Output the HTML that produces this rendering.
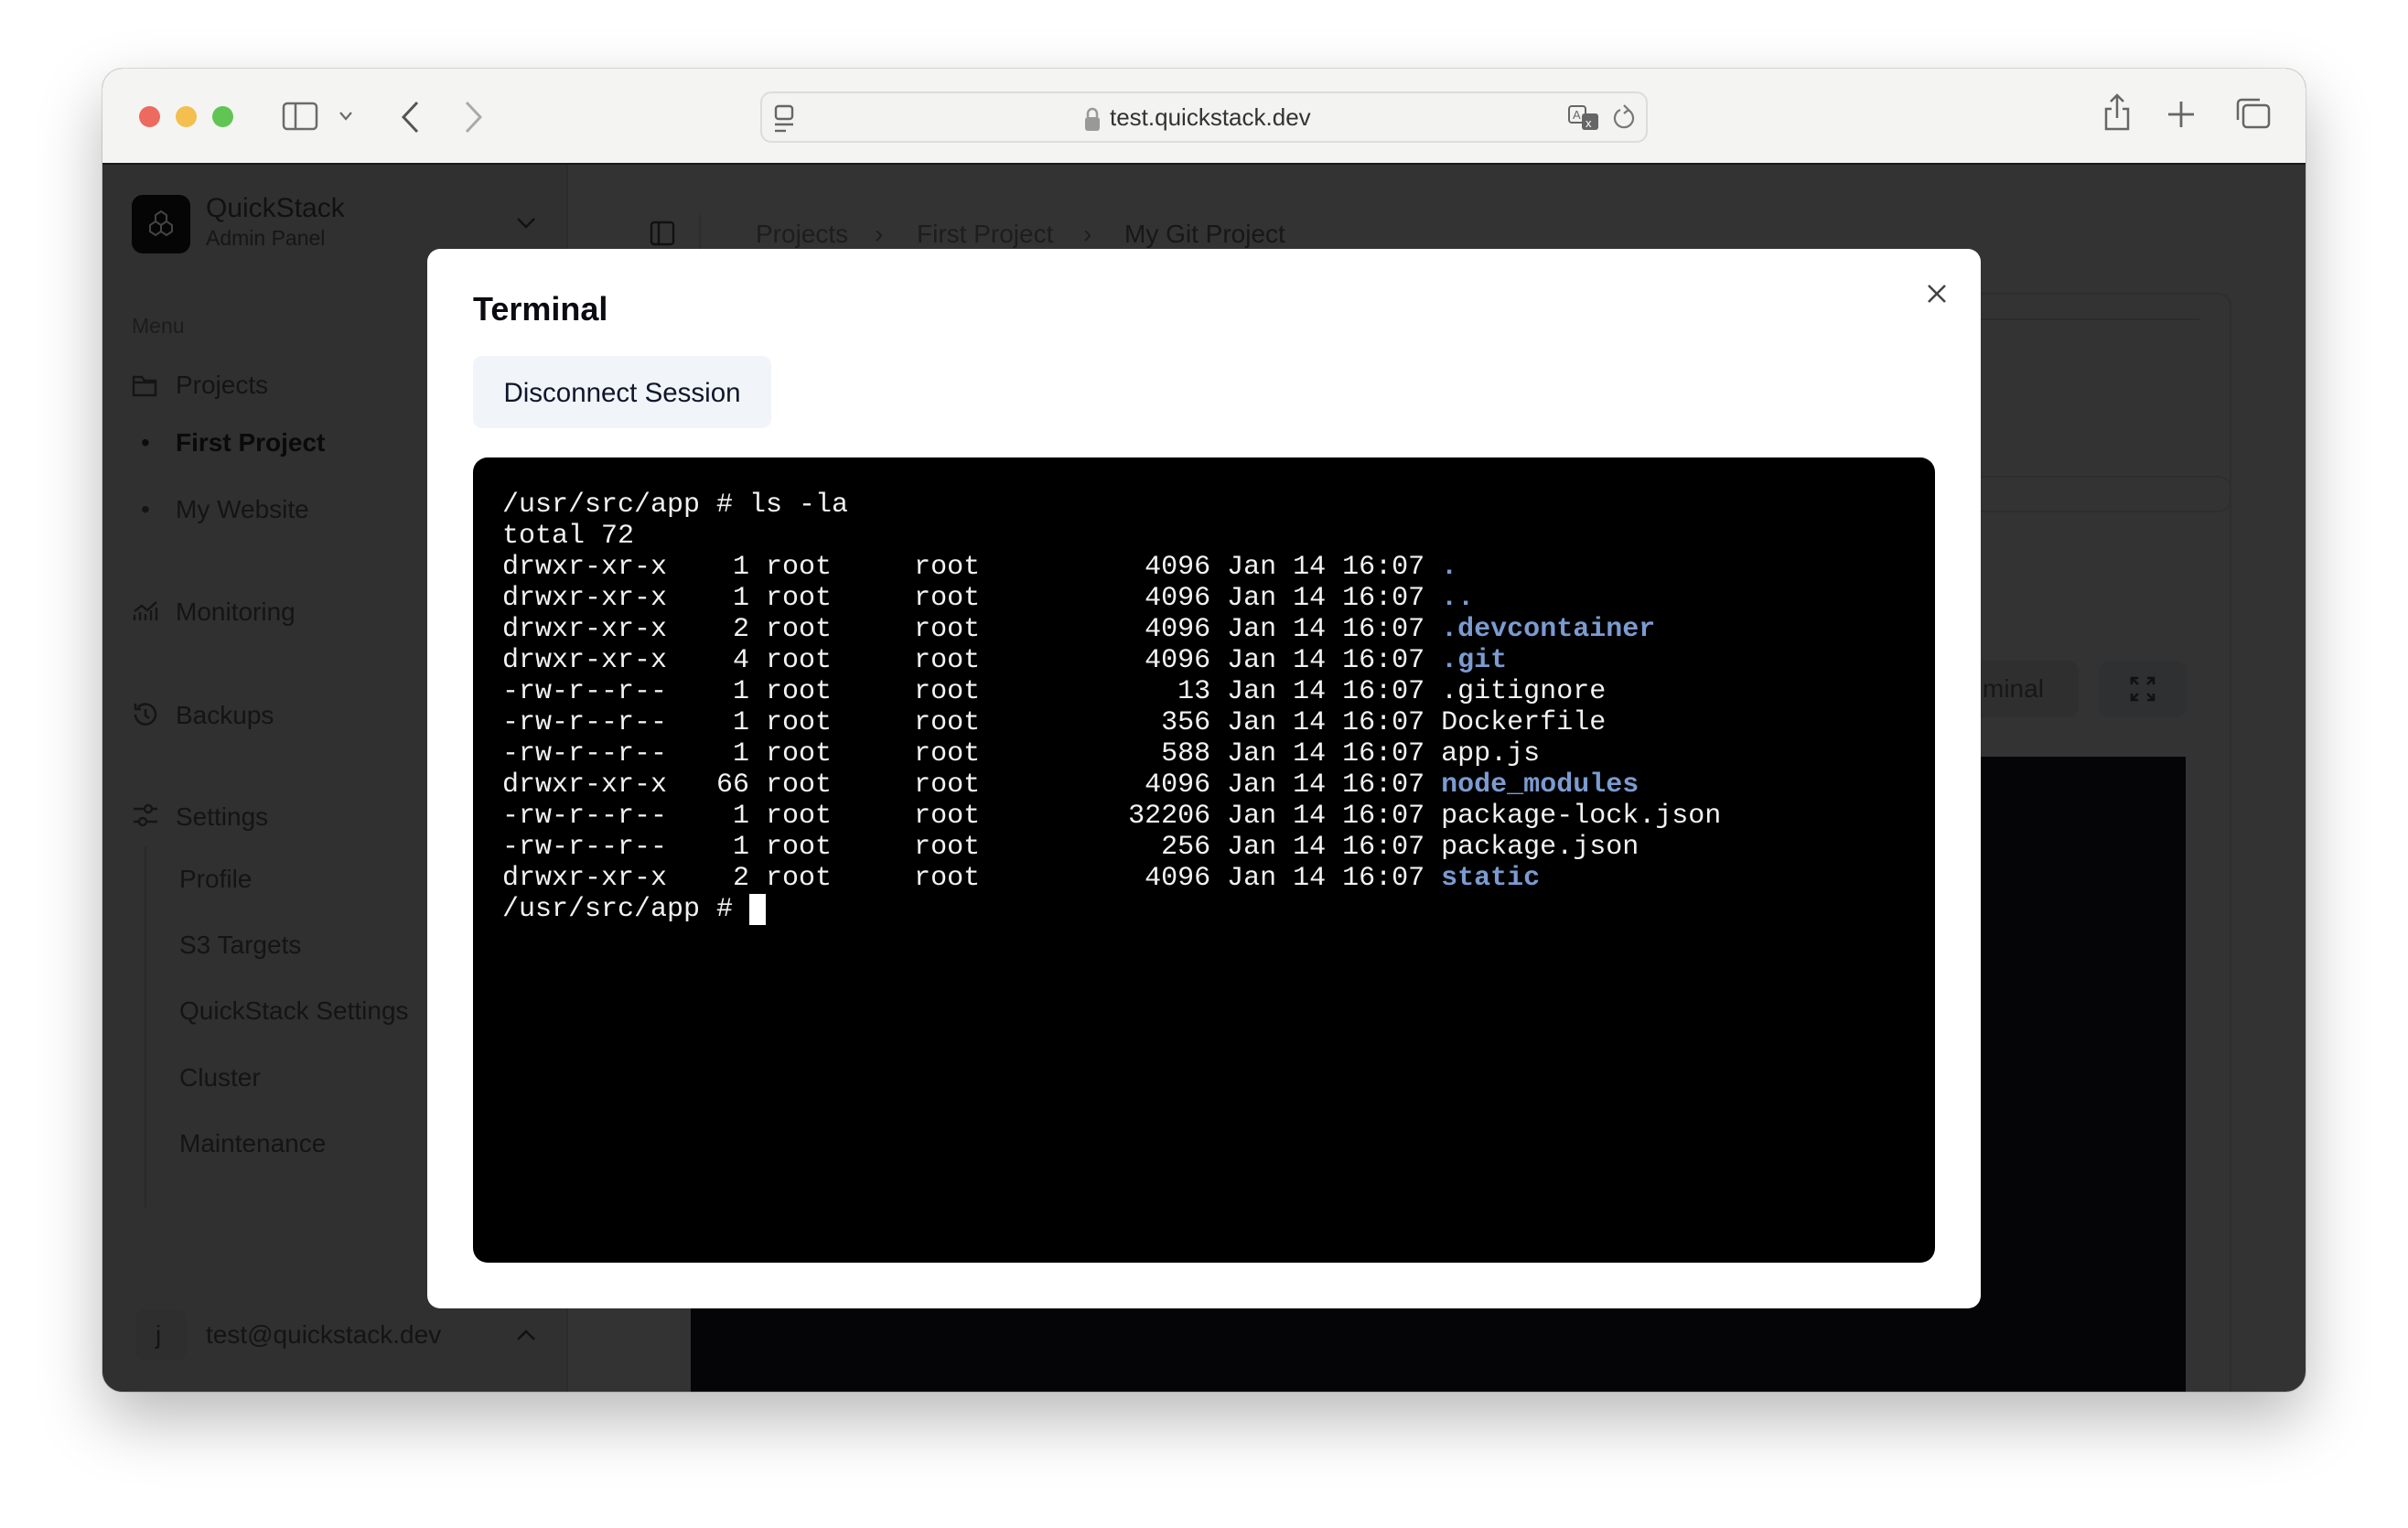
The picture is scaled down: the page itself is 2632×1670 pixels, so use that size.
<!DOCTYPE html>
<html><head><meta charset="utf-8"><style>
*{box-sizing:border-box;margin:0;padding:0}
body{width:2632px;height:1670px;background:#fff;position:relative;overflow:hidden;font-family:"Liberation Sans",sans-serif}
.win{position:absolute;left:112px;top:75px;width:2408px;height:1446px;border-radius:22px;overflow:hidden;background:#333;box-shadow:0 30px 70px rgba(0,0,0,.28),0 0 0 1px rgba(0,0,0,.12)}
.tb{position:absolute;left:0;top:0;width:100%;height:105px;background:#f4f4f3;border-bottom:2px solid #1a1a1a}
.dot{position:absolute;top:41px;width:23px;height:23px;border-radius:50%}
.abs{position:absolute}
.url{position:absolute;left:719px;top:25px;width:970px;height:56px;border:2px solid #dcdcdc;border-radius:12px;background:#f3f3f2}
.sb{position:absolute;left:0;top:105px;width:509px;height:1341px;background:#303030;border-right:2px solid #2c2c2c}
.st{position:absolute;color:#141414;font-size:28px}
.modal{position:absolute;left:355px;top:197px;width:1698px;height:1158px;background:#fff;border-radius:14px}
.term{position:absolute;left:50px;top:228px;width:1598px;height:880px;background:#000;border-radius:16px}
pre{position:absolute;left:32px;top:35px;font-family:"Liberation Mono",monospace;font-size:30px;line-height:34px;color:#f2f2f2}
.b{color:#7b9bd0;font-weight:bold}
</style></head><body>
<div class="win">
 <div class="tb">
  <div class="dot" style="left:40px;background:#ec6a5e"></div>
  <div class="dot" style="left:80px;background:#f4bf4f"></div>
  <div class="dot" style="left:120px;background:#61c554"></div>
  <svg class="abs" style="left:196px;top:36px" width="40" height="32" viewBox="0 0 40 32" fill="none" stroke="#6b6b6b" stroke-width="2.5"><rect x="2" y="2" width="36" height="28" rx="4"/><line x1="15" y1="2" x2="15" y2="30"/></svg>
  <svg class="abs" style="left:258px;top:46px" width="16" height="12" viewBox="0 0 16 12" fill="none" stroke="#6b6b6b" stroke-width="2.2"><path d="M2 2l6 7 6-7"/></svg>
  <svg class="abs" style="left:324px;top:34px" width="24" height="38" viewBox="0 0 24 38" fill="none" stroke="#555" stroke-width="3"><path d="M20 3L5 19l15 16"/></svg>
  <svg class="abs" style="left:394px;top:34px" width="24" height="38" viewBox="0 0 24 38" fill="none" stroke="#aaa" stroke-width="3"><path d="M4 3l15 16L4 35"/></svg>
  <div class="url">
   <svg class="abs" style="left:12px;top:12px" width="26" height="32" viewBox="0 0 26 32" fill="none" stroke="#666" stroke-width="2.4"><rect x="3" y="2" width="18" height="14" rx="3"/><line x1="2" y1="22" x2="22" y2="22"/><line x1="2" y1="29" x2="14" y2="29"/></svg>
   <svg class="abs" style="left:351px;top:14px" width="20" height="28" viewBox="0 0 20 28"><path d="M5 12V8a5 5 0 0110 0v4" fill="none" stroke="#999" stroke-width="2.5"/><rect x="2" y="12" width="16" height="15" rx="3" fill="#999"/></svg>
   <div class="abs" style="left:380px;top:11px;font-size:26px;color:#333">test.quickstack.dev</div>
   <svg class="abs" style="left:880px;top:12px" width="40" height="32" viewBox="0 0 40 32"><rect x="2" y="2" width="18" height="18" rx="3" fill="none" stroke="#666" stroke-width="2"/><text x="6" y="16" font-size="13" fill="#666" font-family="Liberation Sans">A</text><rect x="16" y="10" width="18" height="18" rx="3" fill="#666"/><text x="20" y="25" font-size="13" fill="#fff" font-family="Liberation Sans">x</text></svg>
   <svg class="abs" style="left:928px;top:10px" width="28" height="34" viewBox="0 0 28 34" fill="none" stroke="#777" stroke-width="2.2"><path d="M18 8a10 10 0 11-8 0"/><path d="M14 3l5 5-5 4"/></svg>
  </div>
  <svg class="abs" style="left:2184px;top:26px" width="36" height="44" viewBox="0 0 36 44" fill="none" stroke="#666" stroke-width="2.5"><path d="M12 18H6v22h24V18h-6"/><path d="M18 28V3M11 10l7-7 7 7"/></svg>
  <svg class="abs" style="left:2256px;top:34px" width="32" height="32" viewBox="0 0 32 32" stroke="#666" stroke-width="2.8"><path d="M16 2v28M2 16h28"/></svg>
  <svg class="abs" style="left:2330px;top:30px" width="40" height="38" viewBox="0 0 40 38" fill="none" stroke="#666" stroke-width="2.5"><rect x="10" y="10" width="28" height="24" rx="4"/><path d="M4 26V8a4 4 0 014-4h20"/></svg>
 </div>
 <div class="sb">
  <div class="abs" style="left:32px;top:33px;width:64px;height:64px;border-radius:12px;background:#050505"></div>
  <svg class="abs" style="left:50px;top:48px" width="28" height="34" viewBox="0 0 28 34" fill="none" stroke="#444" stroke-width="2"><path d="M14 3l6 4v7l-6 4-6-4V7z M8 14l6 4v7l-6 4-6-4v-7z M20 14l6 4v7l-6 4-6-4v-7z"/></svg>
  <div class="st" style="left:113px;top:31px;font-size:30px;color:#111">QuickStack</div>
  <div class="st" style="left:113px;top:67px;font-size:23px;color:#161616">Admin Panel</div>
  <svg class="abs" style="left:452px;top:57px" width="22" height="14" viewBox="0 0 22 14" fill="none" stroke="#111" stroke-width="2.5"><path d="M2 2l9 9 9-9"/></svg>
  <div class="st" style="left:32px;top:163px;font-size:23px;color:#1c1c1c">Menu</div>
  <svg class="abs" style="left:32px;top:228px" width="28" height="26" viewBox="0 0 28 26" fill="none" stroke="#151515" stroke-width="2.4"><path d="M2 4h9l3 4h12v16H2z M2 10h24"/></svg>
  <div class="st" style="left:80px;top:225px">Projects</div>
  <div class="st" style="left:42px;top:288px;color:#0c0c0c">•</div>
  <div class="st" style="left:80px;top:288px;color:#0a0a0a;font-weight:bold">First Project</div>
  <div class="st" style="left:42px;top:361px">•</div>
  <div class="st" style="left:80px;top:361px">My Website</div>
  <svg class="abs" style="left:32px;top:476px" width="30" height="24" viewBox="0 0 30 24" fill="none" stroke="#151515" stroke-width="2.4"><path d="M3 22v-6M9 22v-9M15 22v-7M21 22v-11M27 22V8M3 12l8-6 6 5 10-9"/></svg>
  <div class="st" style="left:80px;top:473px">Monitoring</div>
  <svg class="abs" style="left:32px;top:586px" width="30" height="30" viewBox="0 0 30 30" fill="none" stroke="#151515" stroke-width="2.6"><path d="M4 15a11 11 0 103-8M4 3v6h6M15 9v7l4 3"/></svg>
  <div class="st" style="left:80px;top:586px">Backups</div>
  <svg class="abs" style="left:32px;top:697px" width="30" height="28" viewBox="0 0 30 28" fill="none" stroke="#151515" stroke-width="2.4"><path d="M2 7h12M22 7h6M2 21h6M16 21h12"/><circle cx="18" cy="7" r="4"/><circle cx="12" cy="21" r="4"/></svg>
  <div class="st" style="left:80px;top:697px">Settings</div>
  <div class="abs" style="left:46px;top:745px;width:2px;height:395px;background:#2a2a2a"></div>
  <div class="st" style="left:84px;top:765px">Profile</div>
  <div class="st" style="left:84px;top:837px">S3 Targets</div>
  <div class="st" style="left:84px;top:909px">QuickStack Settings</div>
  <div class="st" style="left:84px;top:982px">Cluster</div>
  <div class="st" style="left:84px;top:1054px">Maintenance</div>
  <div class="abs" style="left:36px;top:1251px;width:56px;height:56px;border-radius:12px;background:#2e2e2e"></div>
  <div class="st" style="left:58px;top:1263px">j</div>
  <div class="st" style="left:113px;top:1263px">test@quickstack.dev</div>
  <svg class="abs" style="left:452px;top:1272px" width="22" height="14" viewBox="0 0 22 14" fill="none" stroke="#111" stroke-width="2.5"><path d="M2 12l9-9 9 9"/></svg>
 </div>
 <svg class="abs" style="left:598px;top:166px" width="28" height="28" viewBox="0 0 28 28" fill="none" stroke="#111" stroke-width="2.4"><rect x="2" y="2" width="24" height="24" rx="3"/><line x1="10" y1="2" x2="10" y2="26"/></svg>
 <div class="abs" style="left:652px;top:160px;width:2px;height:40px;background:#2c2c2c"></div>
 <div class="st" style="left:714px;top:165px;color:#1d1d1d">Projects</div>
 <div class="st" style="left:844px;top:165px;color:#1d1d1d">›</div>
 <div class="st" style="left:890px;top:165px;color:#1d1d1d">First Project</div>
 <div class="st" style="left:1072px;top:165px;color:#1d1d1d">›</div>
 <div class="st" style="left:1117px;top:165px;color:#171717">My Git Project</div>
 <div class="abs" style="left:2050px;top:245px;width:277px;height:240px;border:2px solid #2e2e2e;border-left:none;border-radius:0 14px 14px 0"></div>
 <div class="abs" style="left:2050px;top:273px;width:242px;height:2px;background:#2c2c2c"></div>
 <div class="abs" style="left:2050px;top:445px;width:277px;height:1100px;border:2px solid #2e2e2e;border-left:none;border-radius:0 14px 0 0"></div>
 <div class="abs" style="left:2050px;top:647px;width:110px;height:62px;background:#2f2f2f;border-radius:0 12px 12px 0"></div>
 <div class="st" style="left:2055px;top:662px;color:#171717">minal</div>
 <div class="abs" style="left:2182px;top:647px;width:96px;height:62px;background:#2f3031;border-radius:12px"></div>
 <svg class="abs" style="left:2216px;top:664px" width="28" height="28" viewBox="0 0 28 28" fill="none" stroke="#111" stroke-width="2.6"><path d="M2 9V2h7M2 2l7 7M26 9V2h-7M26 2l-7 7M2 19v7h7M2 26l7-7M26 19v7h-7M26 26l-7-7"/></svg>
 <div class="abs" style="left:643px;top:752px;width:1634px;height:700px;background:#050507"></div>
 <div class="modal">
  <div class="abs" style="left:50px;top:45px;font-size:36px;font-weight:bold;color:#0b0b12">Terminal</div>
  <svg class="abs" style="left:1639px;top:38px" width="22" height="22" viewBox="0 0 22 22" stroke="#444" stroke-width="2.6"><path d="M2 2l18 18M20 2L2 20"/></svg>
  <div class="abs" style="left:50px;top:117px;width:326px;height:79px;background:#f1f5f9;border-radius:10px;font-size:29.5px;color:#0f172a;line-height:81px;text-align:center">Disconnect Session</div>
  <div class="term"><pre>/usr/src/app # ls -la
total 72
drwxr-xr-x    1 root     root          4096 Jan 14 16:07 <span class="b">.</span>
drwxr-xr-x    1 root     root          4096 Jan 14 16:07 <span class="b">..</span>
drwxr-xr-x    2 root     root          4096 Jan 14 16:07 <span class="b">.devcontainer</span>
drwxr-xr-x    4 root     root          4096 Jan 14 16:07 <span class="b">.git</span>
-rw-r--r--    1 root     root            13 Jan 14 16:07 .gitignore
-rw-r--r--    1 root     root           356 Jan 14 16:07 Dockerfile
-rw-r--r--    1 root     root           588 Jan 14 16:07 app.js
drwxr-xr-x   66 root     root          4096 Jan 14 16:07 <span class="b">node_modules</span>
-rw-r--r--    1 root     root         32206 Jan 14 16:07 package-lock.json
-rw-r--r--    1 root     root           256 Jan 14 16:07 package.json
drwxr-xr-x    2 root     root          4096 Jan 14 16:07 <span class="b">static</span>
/usr/src/app # <span style="background:#fff"> </span></pre></div>
 </div>
</div>
</body></html>
